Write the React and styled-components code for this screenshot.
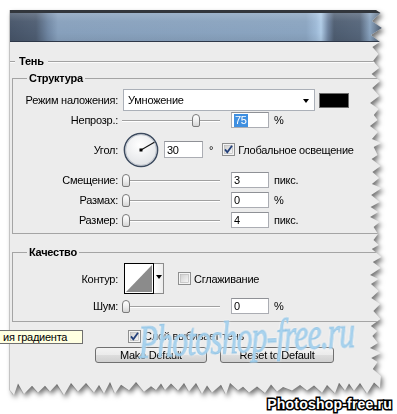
import React from "react";
import styled, { createGlobalStyle } from "styled-components";

const GlobalStyle = createGlobalStyle`
  html, body {
    margin: 0;
    padding: 0;
    background: #fff;
  }
  body {
    font-family: "Liberation Sans", Arial, sans-serif;
    font-size: 11px;
    letter-spacing: -0.25px;
    color: #000;
  }
`;

// torn paper edge along the right and bottom side of the dialog
const tornEdge = (() => {
  let seed = 17;
  const rnd = () => {
    seed = (seed * 16807) % 2147483647;
    return (seed % 1000) / 1000;
  };
  const pts = ["0px 0px", "366px 0px"];
  let out = true;
  for (let y = 3; y < 372; y += 4 + Math.round(rnd() * 4)) {
    const x = out ? 367 + rnd() * 5 : 360 + rnd() * 4;
    pts.push(`${x.toFixed(1)}px ${y}px`);
    out = !out;
  }
  pts.push("370px 378px");
  for (let x = 364; x > 2; x -= 4 + Math.round(rnd() * 5)) {
    const y = out ? 380 + rnd() * 5 : 372 + rnd() * 5;
    pts.push(`${x}px ${y.toFixed(1)}px`);
    out = !out;
  }
  pts.push("0px 380px");
  return pts.join(", ");
})();

const Page = styled.div`
  position: relative;
  width: 397px;
  height: 414px;
  overflow: hidden;
  padding-top: 10px;
  box-sizing: border-box;
`;

const Frame = styled.div`
  margin-left: 10px;
  width: 372px;
  filter: drop-shadow(-1px 0 0.5px rgba(0, 0, 0, 0.15))
    drop-shadow(2px 3px 2.5px rgba(0, 0, 0, 0.55));
`;

const Dialog = styled.div`
  height: 386px;
  background: #ececec;
  clip-path: polygon(${tornEdge});
  display: flex;
  flex-direction: column;
`;

const TitleBar = styled.div`
  flex: none;
  height: 28px;
  border-top: 3px solid #32363c;
  border-bottom: 1px solid #2d3748;
  background: linear-gradient(
      180deg,
      rgba(255, 255, 255, 0.18) 0,
      rgba(255, 255, 255, 0.04) 30%,
      rgba(0, 0, 0, 0) 70%,
      rgba(0, 0, 0, 0.06) 100%
    ),
    linear-gradient(
      90deg,
      #465468 0,
      #4e5d72 26px,
      #6f86a2 38px,
      #87a0bc 48px,
      #8aa4c0 296px,
      #9db9d6 306px,
      #afcbe6 311px,
      #6f84a0 318px,
      #4e5d71 324px,
      #55657a 350px,
      #8aa4c0 360px,
      #4a5667 372px
    );
`;

const Body = styled.div`
  display: flex;
  flex-direction: column;
`;

const SectionHead = styled.div`
  display: flex;
  align-items: center;
  height: 13px;
  margin-top: 13px;
`;

const Rule = styled.div`
  height: 1px;
  background: #a2a2a2;
  box-shadow: 0 1px 0 #fbfbfb;
  width: ${(p) => (p.$w ? `${p.$w}px` : "auto")};
  flex: ${(p) => (p.$w ? "none" : "1")};
`;

const HeadText = styled.span`
  font-weight: bold;
  margin: 0 4px;
  line-height: 13px;
`;

const Group = styled.fieldset`
  margin: ${(p) => p.$top}px -20px 0 2px;
  padding: 0 0 ${(p) => p.$bottom}px 0;
  border: 1px solid #a4a4a4;
  min-width: 0;
`;

const Legend = styled.legend`
  margin-left: 14px;
  padding: 0 2px;
  font-weight: bold;
  line-height: 14px;
`;

const Row = styled.div`
  display: flex;
  align-items: center;
  height: ${(p) => p.$h}px;
  margin-top: ${(p) => p.$top || 0}px;
`;

const Label = styled.span`
  flex: none;
  width: 105px;
  text-align: right;
  margin-right: ${(p) => p.$gap ?? 5}px;
  white-space: nowrap;
`;

const Select = styled.div`
  box-sizing: border-box;
  width: 192px;
  height: 22px;
  border: 1px solid #abb0b8;
  background: #fff;
  display: flex;
  align-items: center;
  justify-content: space-between;
  padding: 0 5px 0 4px;
`;

const Caret = styled.span`
  width: 0;
  height: 0;
  border-left: 3.5px solid transparent;
  border-right: 3.5px solid transparent;
  border-top: 4px solid #000;
  margin-top: 2px;
`;

const Swatch = styled.div`
  box-sizing: border-box;
  margin-left: 4px;
  width: 30px;
  height: 15px;
  background: #000;
  border: 1px solid #6d6d6d;
`;

const Slider = styled.div`
  position: relative;
  flex: none;
  margin-left: 4px;
  width: 98px;
  height: 16px;
`;

const Track = styled.div`
  position: absolute;
  left: 0;
  right: 0;
  top: 8px;
  height: 1px;
  background: #a0a0a0;
  box-shadow: 0 1px 0 #fff;
`;

const Thumb = styled.div`
  position: absolute;
  left: ${(p) => p.$pos}px;
  top: 2px;
  width: 6px;
  height: 11px;
  border: 1px solid #7b7b7b;
  border-radius: 4px 4px 2px 2px;
  background: linear-gradient(180deg, #ffffff 0%, #ededed 55%, #d4d4d4 100%);
`;

const NumField = styled.div`
  box-sizing: border-box;
  flex: none;
  margin-left: ${(p) => p.$left ?? 9}px;
  width: ${(p) => p.$w || 38}px;
  height: ${(p) => p.$h || 16}px;
  border: 1px solid #abadb3;
  border-top-color: #8f9196;
  background: #fff;
  padding-left: 2px;
  display: flex;
  align-items: center;
`;

const Selected = styled.span`
  background: #3f8fe0;
  color: #fff;
  padding: 0 1px;
  line-height: 13px;
`;

const Unit = styled.span`
  margin-left: ${(p) => p.$left ?? 5}px;
`;

const CheckLabel = styled.label`
  display: flex;
  align-items: center;
  margin-left: ${(p) => p.$left || 0}px;
  white-space: nowrap;

  span {
    margin-left: 3px;
  }
`;

const Picker = styled.div`
  display: flex;
  margin-left: 1px;
  height: 31px;
`;

const PickerArrow = styled.div`
  box-sizing: border-box;
  width: 10px;
  border: 1px solid #8c8c8c;
  border-left: none;
  background: linear-gradient(90deg, #ffffff, #ececec);
  display: flex;
  justify-content: center;
  padding-top: 9px;
`;

const BottomRow = styled.div`
  display: flex;
  align-items: center;
  height: 14px;
  margin-top: 7px;
  padding-left: 118px;
`;

const ButtonRow = styled.div`
  display: flex;
  gap: 13px;
  margin-top: 4px;
  padding-left: 85px;
`;

const Button = styled.div`
  box-sizing: border-box;
  width: ${(p) => p.$w}px;
  height: 16px;
  border: 1px solid #707070;
  border-radius: 3px;
  background: linear-gradient(180deg, #f3f3f3 0%, #ebebeb 48%, #dddddd 52%, #d0d0d0 100%);
  display: flex;
  align-items: center;
  justify-content: center;
  line-height: 14px;
`;

const Tooltip = styled.div`
  position: absolute;
  left: -6px;
  top: 330px;
  width: 89px;
  box-sizing: border-box;
  height: 14px;
  line-height: 12px;
  padding-left: 8px;
  border: 1px solid #6f6f6f;
  background: #ffffe1;
  white-space: nowrap;
  overflow: hidden;
`;

const Watermark = styled.div`
  position: absolute;
  left: 138px;
  top: 316px;
  font-family: "Liberation Serif", serif;
  font-style: italic;
  font-size: 32px;
  letter-spacing: -1px;
  color: rgba(140, 196, 232, 0.75);
  -webkit-text-stroke: 0.6px rgba(120, 180, 220, 0.6);
  text-shadow: 0 0 2px #fff, 0 0 1px #fff;
  transform: scaleY(1.45) rotate(-2deg);
  transform-origin: left top;
  white-space: nowrap;
  pointer-events: none;
`;

const SiteMark = styled.div`
  text-align: right;
  padding-right: 5px;
  font-family: "Liberation Sans", Arial, sans-serif;
  font-weight: bold;
  font-size: 14px;
  line-height: 17px;
  color: #fff;
  -webkit-text-stroke: 3px #000;
  paint-order: stroke fill;
  letter-spacing: 0.2px;
`;

const CheckBox = ({ checked }) => (
  <svg width="13" height="13" viewBox="0 0 13 13" style={{ flex: "none" }}>
    <defs>
      <linearGradient id={checked ? "cbOn" : "cbOff"} x1="0" y1="0" x2="1" y2="1">
        <stop offset="0" stopColor="#cfcfcf" />
        <stop offset="1" stopColor="#f7f7f7" />
      </linearGradient>
    </defs>
    <rect x="0.5" y="0.5" width="12" height="12" fill="#f4f4f4" stroke="#8e8f8f" />
    <rect x="2.5" y="2.5" width="8" height="8" fill={`url(#${checked ? "cbOn" : "cbOff"})`} stroke="#b3b3b3" strokeWidth="0.6" />
    {checked && (
      <path d="M3 6.4 L5.3 9.2 L10 2.8" fill="none" stroke="#23407a" strokeWidth="1.8" />
    )}
  </svg>
);

const Dial = () => (
  <svg width="36" height="36" viewBox="0 0 36 36" style={{ flex: "none" }}>
    <defs>
      <radialGradient id="dialFill" cx="0.45" cy="0.35" r="0.7">
        <stop offset="0" stopColor="#ffffff" />
        <stop offset="1" stopColor="#dfe1e4" />
      </radialGradient>
    </defs>
    <circle cx="18" cy="18" r="16.6" fill="url(#dialFill)" stroke="#3c4a5e" strokeWidth="1.5" />
    <circle cx="18" cy="18" r="15.4" fill="none" stroke="#a7b0bc" strokeWidth="0.6" />
    <line x1="18" y1="18" x2="31.4" y2="10.3" stroke="#111" strokeWidth="1.1" />
    <rect x="16.5" y="16.5" width="3" height="3" fill="#000" />
  </svg>
);

const ContourPreview = () => (
  <svg width="30" height="31" viewBox="0 0 30 31" style={{ flex: "none" }}>
    <rect x="0.5" y="0.5" width="29" height="30" fill="#fff" stroke="#000" />
    <polygon points="2,29 28,2 28,29" fill="#8b8b8b" />
  </svg>
);

const SliderRow = ({ label, pos, value, unit, h = 20, top = 0 }) => (
  <Row $h={h} $top={top}>
    <Label $gap={0}>{label}</Label>
    <Slider>
      <Track />
      <Thumb $pos={pos} />
    </Slider>
    <NumField $left={11}>{value}</NumField>
    <Unit>{unit}</Unit>
  </Row>
);

export default function App() {
  return (
    <>
      <GlobalStyle />
      <Page>
        <Frame>
          <Dialog>
            <TitleBar />
            <Body>
              <SectionHead>
                <Rule $w={5} />
                <HeadText>Тень</HeadText>
                <Rule />
              </SectionHead>

              <Group $top={3} $bottom={3}>
                <Legend>Структура</Legend>
                <Row $h={22} $top={4}>
                  <Label>Режим наложения:</Label>
                  <Select>
                    <span>Умножение</span>
                    <Caret />
                  </Select>
                  <Swatch />
                </Row>
                <Row $h={18} $top={0}>
                  <Label $gap={0}>Непрозр.:</Label>
                  <Slider>
                    <Track />
                    <Thumb $pos={70} />
                  </Slider>
                  <NumField $left={11}>
                    <Selected>75</Selected>
                  </NumField>
                  <Unit>%</Unit>
                </Row>
                <Row $h={41}>
                  <Label>Угол:</Label>
                  <Dial />
                  <NumField $left={5} $w={39} $h={17}>
                    30
                  </NumField>
                  <Unit $left={6}>°</Unit>
                  <CheckLabel $left={9}>
                    <CheckBox checked />
                    <span>Глобальное освещение</span>
                  </CheckLabel>
                </Row>
                <SliderRow label="Смещение:" pos={0} value="3" unit="пикс." />
                <SliderRow label="Размах:" pos={0} value="0" unit="%" />
                <SliderRow label="Размер:" pos={0} value="4" unit="пикс." />
              </Group>

              <Group $top={11} $bottom={6}>
                <Legend>Качество</Legend>
                <Row $h={31} $top={4}>
                  <Label>Контур:</Label>
                  <Picker>
                    <ContourPreview />
                    <PickerArrow>
                      <Caret />
                    </PickerArrow>
                  </Picker>
                  <CheckLabel $left={14}>
                    <CheckBox />
                    <span>Сглаживание</span>
                  </CheckLabel>
                </Row>
                <SliderRow label="Шум:" pos={0} value="0" unit="%" h={18} top={3} />
              </Group>

              <BottomRow>
                <CheckLabel>
                  <CheckBox checked />
                  <span>Слой выбивает тень</span>
                </CheckLabel>
              </BottomRow>
              <ButtonRow>
                <Button $w={112}>Make Default</Button>
                <Button $w={114}>Reset to Default</Button>
              </ButtonRow>
            </Body>
          </Dialog>
        </Frame>
        <SiteMark>Photoshop-free.ru</SiteMark>
        <Tooltip>ия градиента</Tooltip>
        <Watermark>Photoshop-free.ru</Watermark>
      </Page>
    </>
  );
}
